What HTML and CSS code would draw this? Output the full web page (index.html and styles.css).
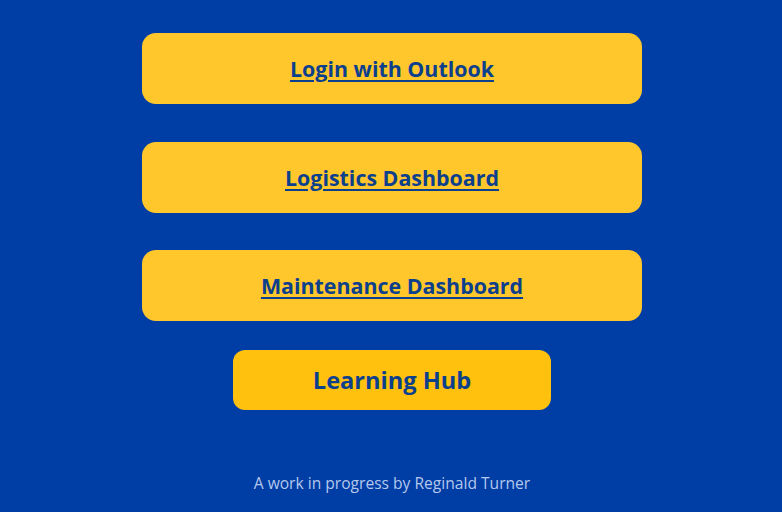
FILE: index.html
```html
<!DOCTYPE html>
<html lang="en">
<head>
<meta charset="utf-8">
<title>Hub</title>
<link rel="stylesheet" href="styles.css">
</head>
<body>
<main class="page">
  <div class="links">
    <a class="tile" href="#">Login with Outlook</a>
    <a class="tile" href="#">Logistics Dashboard</a>
    <a class="tile" href="#">Maintenance Dashboard</a>
  </div>
  <button class="hub" type="button">Learning Hub</button>
  <footer class="credit">A work in progress by Reginald Turner</footer>
</main>
</body>
</html>
```
FILE: styles.css
```css
html, body {
  margin: 0;
  padding: 0;
  background: #003da5;
  height: 100%;
}
body {
  font-family: "Open Sans", "Noto Sans", sans-serif;
}
.page {
  display: flex;
  flex-direction: column;
  align-items: center;
  padding-top: 33px;
  padding-left: 2px;
}
.links {
  display: flex;
  flex-direction: column;
  gap: 37.5px;
}
.tile {
  display: flex;
  align-items: center;
  justify-content: center;
  width: 500px;
  height: 71px;
  box-sizing: border-box;
  background: #ffc72c;
  border-radius: 14px;
  color: #0c3f8c;
  font-weight: 700;
  font-size: 21.4px;
  text-decoration: underline;
  text-decoration-thickness: 2px;
  text-underline-offset: 3px;
}
.hub {
  margin-top: 29px;
  width: 318px;
  height: 60px;
  border: none;
  border-radius: 12px;
  background: #ffc10e;
  color: #0c3f8c;
  font-family: inherit;
  font-weight: 700;
  font-size: 23.6px;
}
.credit {
  margin-top: 62px;
  color: #b4c8ec;
  font-size: 15.6px;
}
```
